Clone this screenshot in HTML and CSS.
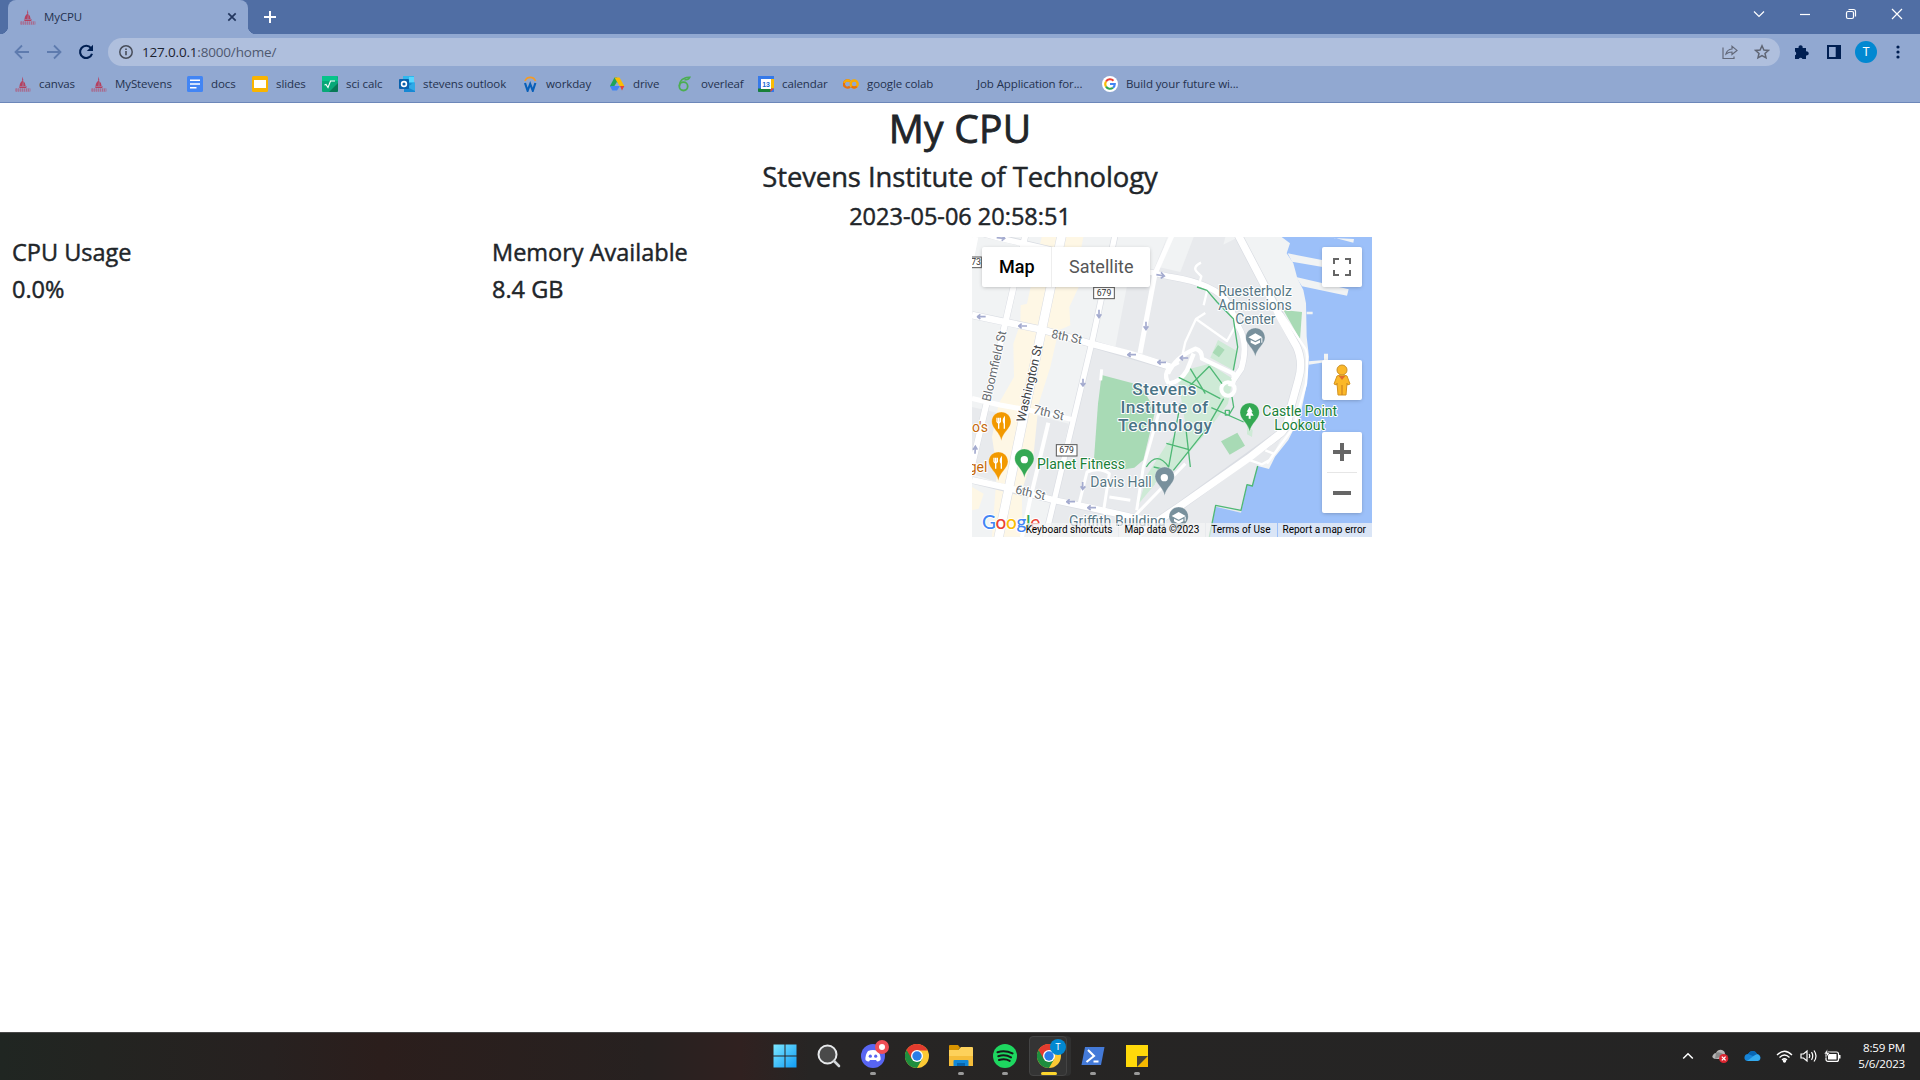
FILE: index.html
```html
<!DOCTYPE html>
<html lang="en">
<head>
<meta charset="utf-8">
<title>MyCPU</title>
<link rel="stylesheet" href="styles.css">
</head>
<body>
<svg class="defs" width="0" height="0">
  <defs>
    <symbol id="stevens" viewBox="0 0 16 16">
      <path d="M7.6 0.5 L8.3 4 L8 5 L7 4.5Z M4.5 10 Q5 6 8 4.6 L7.6 10Z M8.3 5 Q10.8 7 10.6 10 L8.3 10Z M3.8 10.6 H12 L11 12 H4.6Z" fill="#b5405f"/>
      <path d="M.5 13h15M.5 15h15" stroke="#b25272" stroke-width="1" stroke-dasharray="1.5 .6"/>
      <path d="M.5 14h15" stroke="#b25272" stroke-width="1" stroke-dasharray=".8 1.3"/>
    </symbol>
    <symbol id="chrome" viewBox="0 0 24 24">
      <circle cx="12" cy="12" r="12" fill="#fcc934"/>
      <path d="M12 12 L1.6 6 A12 12 0 0 0 12 24 L17.2 15Z" fill="#1e8e3e"/>
      <path d="M12 6.5 H22.6 A12 12 0 0 0 1.6 6 L6.8 15 L12 12Z" fill="#e33b2e"/>
      <circle cx="12" cy="12" r="6" fill="#fff"/><circle cx="12" cy="12" r="4.7" fill="#2a7de9"/>
    </symbol>
    <symbol id="pin" viewBox="0 0 60 88"><path d="M30 1C13 1 1 14 1 30C1 50 25 60 30 87C35 60 59 50 59 30C59 14 47 1 30 1Z" fill="currentColor" stroke="#fff" stroke-opacity=".6" stroke-width="1.5"/></symbol>
    <symbol id="arrow" viewBox="-14 -9 28 18"><path d="M13 0H-8M-3 -7L-12 0L-3 7" fill="none" stroke="#a4abcf" stroke-width="5"/></symbol>
  </defs>
</svg>
<header class="browser">
  <div class="tabstrip">
    <div class="tab"><svg width="16" height="16"><use href="#stevens"/></svg><span>MyCPU</span>
      <svg class="tab-close" width="10" height="10" viewBox="0 0 10 10"><path d="M1.3 1.3l7.4 7.4M8.7 1.3L1.3 8.7" stroke="#22365e" stroke-width="1.7"/></svg></div>
    <svg class="newtab" width="12" height="12" viewBox="0 0 12 12"><path d="M6 0v12M0 6h12" stroke="#fff" stroke-width="2"/></svg>
    <div class="window-buttons">
      <svg width="12" height="12" viewBox="0 0 12 12"><path d="M1 3.5l5 5 5-5"/></svg>
      <svg width="12" height="12" viewBox="0 0 12 12"><path d="M1 6.5h10"/></svg>
      <svg width="12" height="12" viewBox="0 0 12 12"><rect x="1.5" y="3.5" width="7" height="7" rx="1.5"/><path d="M3.5 1.5H8.5Q10.5 1.5 10.5 3.5V8.5"/></svg>
      <svg width="12" height="12" viewBox="0 0 12 12"><path d="M1 1l10 10M11 1L1 11"/></svg>
    </div>
  </div>
  <div class="toolbar">
    <svg class="nav" width="16" height="16" viewBox="0 0 16 16"><path d="M15 8H2M8 1.5L1.5 8L8 14.5" fill="none" stroke="#5e7bae" stroke-width="1.8"/></svg>
    <svg class="nav" width="16" height="16" viewBox="0 0 16 16"><path d="M1 8h13M8 1.5L14.5 8L8 14.5" fill="none" stroke="#5e7bae" stroke-width="1.8"/></svg>
    <svg class="nav" width="16" height="16" viewBox="0 0 16 16"><path d="M13 4.2A6.1 6.1 0 1 0 14 9.7" fill="none" stroke="#001f52" stroke-width="2.1"/><path d="M15 .8V7H8.8Z" fill="#001f52"/></svg>
    <div class="address">
      <svg width="14" height="14" viewBox="0 0 14 14"><circle cx="7" cy="7" r="6.2" fill="none" stroke="#474d5a" stroke-width="1.5"/><path d="M7 6v4.3M7 3.4v1.6" stroke="#474d5a" stroke-width="1.6"/></svg>
      <span class="url"><b>127.0.0.1</b>:8000/home/</span>
      <svg class="share" width="16" height="16" viewBox="0 0 16 16" fill="none" stroke="#63697a" stroke-width="1.2"><path d="M1 3.5V14.5H12V12.5M4 10Q5 5.5 10 5V2.2L15 6.4L10 10.5V8Q6.5 8 4 10Z"/></svg>
      <svg width="16" height="16" viewBox="0 0 16 16"><path d="M8 1.8L9.9 6L14.4 6.4L11 9.4L12 13.8L8 11.5L4 13.8L5 9.4L1.6 6.4L6.1 6Z" fill="none" stroke="#5f6574" stroke-width="1.5"/></svg>
    </div>
    <div class="actions">
      <svg width="16" height="16" viewBox="0 0 16 16"><path d="M1 4H4.6A2.1 2.1 0 1 1 8.6 4H12V7.4A2.1 2.1 0 1 1 12 11.4V15H8.5A2.1 2.1 0 0 0 4.7 15H1V11.3A2.1 2.1 0 0 0 1 7.5Z" fill="#001f52"/></svg>
      <svg width="14" height="14" viewBox="0 0 14 14"><path d="M0 0H14V14H0ZM2 2V12H8.7V2Z" fill="#001f52" fill-rule="evenodd"/></svg>
      <span class="avatar">T</span>
      <svg width="4" height="14" viewBox="0 0 4 14" fill="#001f52"><circle cx="2" cy="2" r="1.6"/><circle cx="2" cy="7" r="1.6"/><circle cx="2" cy="12" r="1.6"/></svg>
    </div>
  </div>
  <nav class="bookmarks">
    <a><svg viewBox="0 0 16 16"><use href="#stevens"/></svg>canvas</a>
    <a><svg viewBox="0 0 16 16"><use href="#stevens"/></svg>MyStevens</a>
    <a><svg viewBox="0 0 16 16"><rect width="16" height="16" rx="1.5" fill="#4285f4"/><path d="M3 4.2h10M3 8h10M3 11.8h6.5" stroke="#fff" stroke-width="1.6"/></svg>docs</a>
    <a><svg viewBox="0 0 16 16"><rect width="16" height="16" rx="1.5" fill="#f9b401"/><rect x="2" y="4" width="12" height="8" fill="#fff"/></svg>slides</a>
    <a><svg viewBox="0 0 16 16"><rect width="16" height="16" rx="1" fill="#08a878"/><path d="M1 0H15L16 5H0V1Z" fill="#06c48a"/><path d="M7 16L16 7V15L15 16Z" fill="#087856"/><path d="M2.5 9L4 8.5L6 11.5L8.5 5H13" fill="none" stroke="#fff" stroke-width="1.1"/></svg>sci calc</a>
    <a><svg viewBox="0 0 16 16"><rect x="4" width="11" height="9" fill="#31b7ed"/><path d="M10 1H15V6H10Z" fill="#57d6ff"/><path d="M5 6L16 8V16H5Z" fill="#1688d4"/><path d="M8 11L16 6V15Z" fill="#30a9e7"/><rect y="3" width="10" height="10" rx="1" fill="#0861ad"/><circle cx="5" cy="8" r="2.4" fill="none" stroke="#fff" stroke-width="1.6"/></svg>stevens outlook</a>
    <a><svg viewBox="0 0 16 16"><path d="M3 5A5.6 5.6 0 0 1 13.5 5" fill="none" stroke="#f39b28" stroke-width="1.8"/><path d="M3 7L5.6 14.8L8.2 8L10.8 14.8L13.4 7" fill="none" stroke="#075fb9" stroke-width="2.1"/></svg>workday</a>
    <a><svg viewBox="0 0 16 16"><path d="M5.5 1.5H8L10 5L4 14L1 10Z" fill="#1da45a"/><path d="M5.5 1.5H10.5L15.3 10H10.3Z" fill="#fbbc04"/><path d="M1 10H11L8 14.5H3.3Z" fill="#4285f4"/><path d="M11 10H15.3L13 14.5Z" fill="#e94235"/><path d="M8 5.8L5.4 10H10.4Z" fill="#91a8d1"/></svg>drive</a>
    <a><svg viewBox="0 0 16 16"><circle cx="6.5" cy="10.3" r="4.2" fill="none" stroke="#4bae51" stroke-width="1.8"/><path d="M2.4 10Q2.5 4.5 7 2.5Q9.5 1.2 12.8 1.3Q11.5 4.3 7.5 3.6" fill="none" stroke="#4bae51" stroke-width="1.6"/></svg>overleaf</a>
    <a><svg viewBox="0 0 16 16"><path d="M0 0H16V16H0Z" fill="#3579e9"/><path d="M12.5 3H16V12.5H12.5Z" fill="#fbbc04"/><path d="M0 12.5H12.5V16H1Q0 16 0 15Z" fill="#188038"/><path d="M12.5 12.5H16L12.5 16Z" fill="#ea4335"/><path d="M3 3H13V13H3Z" fill="#fff"/><text x="8" y="10.9" class="cal">13</text></svg>calendar</a>
    <a><svg viewBox="0 0 16 16" fill="none" stroke-width="2.4"><path d="M7 5.4A3.6 3.6 0 1 0 7 10.6" stroke="#e8710a"/><path d="M1.2 7A3.6 3.6 0 0 1 7 5.4" stroke="#f9ab00"/><circle cx="11.2" cy="8" r="3.5" stroke="#f9ab00"/><path d="M13.7 10.5A3.5 3.5 0 0 1 8.7 10.5" stroke="#e8710a"/></svg>google colab</a>
    <a><svg viewBox="0 0 16 16"></svg>Job Application for...</a>
    <a><svg viewBox="0 0 16 16" fill="none" stroke-width="2.1"><circle cx="8" cy="8" r="8" fill="#fff"/><path d="M4 5.5A4.8 4.8 0 0 1 11.5 4.7" stroke="#ea4335"/><path d="M4 5.5A4.8 4.8 0 0 0 4 10.6" stroke="#fbbc04"/><path d="M4 10.6A4.8 4.8 0 0 0 11 11.7" stroke="#34a853"/><path d="M11 11.7A4.8 4.8 0 0 0 12.8 8H8" stroke="#4285f4"/></svg>Build your future wi...</a>
  </nav>
</header>

<main class="page">
  <h1>My CPU</h1>
  <h3>Stevens Institute of Technology</h3>
  <h4 class="date">2023-05-06 20:58:51</h4>
  <div class="row">
    <section><h4>CPU Usage</h4><h4>0.0%</h4></section>
    <section><h4>Memory Available</h4><h4>8.4 GB</h4></section>
    <section>
      <div class="map">
        <svg class="map-canvas" width="400" height="300" viewBox="0 0 1200 900">
          <rect width="1200" height="900" fill="#f1f3f4"/>
          <path d="M470 120L600 100L800 0L870 129L990 370L960 540L900 660L857 687L841 747L807 827L731 809L712 900H219L300 545L359 319L430 330Z" fill="#e8eaed"/>
          <path d="M585 0H760L720 160L540 110ZM0 510L130 540L90 740L0 710ZM170 530L290 560L240 780L130 750Z" fill="#e8eaed"/>
          <path d="M585 0H665L625 105L560 90Z" fill="#f1f3f4"/>
          <path d="M209 0H334L315 100L320 150L292 210L295 265L260 280L235 390L200 500L185 650L150 760L150 899H60L75 700L60 600L80 500L126 420L124 320L145 260L146 205L165 200Z" fill="#fef7e5"/>
          <path d="M0 750L35 770L20 815L0 820Z" fill="#fef7e5"/>
          <path d="M929 0L954 19L944 49L964 79L976 124L994 159L1002 199L1004 299L1011 359L1004 444L984 539L949 609L909 659L891 696L857 687L841 747L825 743L807 827L731 809L712 900H1200V0Z" fill="#9cc0f9"/>
          <path d="M947 49L1065 72V92L960 74ZM972 120L1130 157L1125 176L990 148ZM1020 0L1146 6L1144 17L1090 3ZM1004 224H1022V232H1004ZM1010 373L1056 369V350H1068V374L1010 383Z" fill="#f1f3f4"/>
          <path d="M934 219L990 225L984 307Z" fill="#a8dab5"/>
          <path d="M389 414L505 445L550 520L514 669L487 692L444 699L385 688L366 665L378 500Z" fill="#a8dab5"/>
          <path d="M738 309L796 343L784 400L715 362ZM655 395L712 380L782 425L768 500L700 590L604 700L540 745L515 730L585 620L640 560L618 430ZM525 720L550 740L500 800ZM826 565L842 580L840 600L825 592Z" fill="#ceead6"/>
          <path d="M738 324L758 338L741 361L722 347ZM796 587L819 626L773 653L747 613Z" fill="#a8dab5"/>
          <g class="roads edge">
            <path d="M269 -5L207 289L79 905" stroke-width="29"/><path d="M160 -5L104 240L-10 729" stroke-width="21"/>
            <path d="M429 -5L359 319L219 905" stroke-width="20"/><path d="M0 234L214 279L354 319L594 389" stroke-width="23"/>
            <path d="M34 -10L264 45L594 119Q730 140 769 199L807 285Q830 320 808 395L784 430" stroke-width="20"/><path d="M0 729L244 789L474 839L560 855" stroke-width="22"/>
            <path d="M799 -5L869 129L974 329Q995 375 979 429L954 519Q948 575 919 594L629 804L480 905" stroke-width="26"/>
          </g>
          <g class="roads">
            <path d="M269 -5L207 289L79 905" stroke-width="26"/><path d="M160 -5L104 240L-10 729M10 0L-6 80" stroke-width="18"/>
            <path d="M429 -5L359 319L219 905" stroke-width="16"/><path d="M229 557L174 789L149 905" stroke-width="12"/>
            <path d="M600 -5L549 110L504 349" stroke-width="15"/>
            <path d="M0 234L94 254L214 279L354 319L474 351L594 389" stroke-width="20"/>
            <path d="M0 484L84 504L174 520L299 547" stroke-width="15"/>
            <path d="M34 -10L84 4L264 45L594 119Q730 140 769 199L800 270Q830 320 808 395L784 430" stroke-width="17"/>
            <path d="M0 729L114 754L244 789L364 814L474 839L560 855" stroke-width="19"/>
            <path d="M799 -5L869 129L929 249L974 329Q995 375 979 429L954 519Q948 575 919 594L829 664L629 804L480 905" stroke-width="22"/>
            <path d="M588 410Q610 360 670 335Q690 340 690 365L784 410Q790 450 770 440M590 440Q625 435 645 400L665 350M590 440Q565 400 620 375" stroke-width="13"/>
            <path d="M632 350L640 315L672 246L765 312L800 250M672 246L700 228" stroke-width="7"/>
            <path d="M687 77Q660 90 675 105L688 118L684 132M695 205L708 150" stroke-width="7"/>
            <circle cx="768" cy="456" r="20" stroke-width="12"/>
            <path d="M389 397L386 430M494 820L514 690L560 530M320 805L345 705Q385 690 412 710L395 820M412 780L475 790M475 850L640 680" stroke-width="9"/>
            <path d="M929 229L1000 335Q1010 350 1002 440L965 570L885 680M835 670L870 682L892 670L905 650L880 640" stroke-width="7"/>
          </g>
          <g fill="none" stroke="#4fb875" stroke-width="4" stroke-linejoin="round">
            <path d="M675 150L705 160L735 195L784 245L797 330L784 400"/>
            <path d="M620 421L675 448L745 485M712 388L650 450M712 388L750 440M655 395L700 470M718 512L815 555M780 480L785 510L770 535M755 485L700 580L604 700M583 619L651 638M545 690L590 700M523 690Q555 640 590 690L625 500M655 690L640 560M760 520h12v14h-12z"/>
            <path d="M857 687L841 747L825 743L807 820L731 805L712 900"/>
          </g>
          <g><use href="#arrow" x="14" y="230" width="28" height="18"/><use href="#arrow" x="138" y="258" width="28" height="18"/><use href="#arrow" x="465" y="344" width="28" height="18"/><use href="#arrow" x="555" y="367" width="28" height="18"/><use href="#arrow" x="622" y="354" width="28" height="18"/><use href="#arrow" x="282" y="785" width="28" height="18"/><use href="#arrow" x="345" y="803" width="28" height="18"/>
            <path d="M74 2L98 4M91 -4L98 4L89 11M553 113L577 117M567 106L577 117L566 124M381 218V242M374 232L381 242L388 232M522 254V278M515 268L522 278L529 268M333 425V447M326 438L333 447L340 438M332 735V757M326 748L332 757L340 748M9 650L10 628M3 638L10 628L16 638" fill="none" stroke="#a4abcf" stroke-width="5"/></g>
          <g fill="#fff" stroke="#555" stroke-width="3"><rect x="365" y="151" width="62" height="34"/><rect x="253" y="623" width="62" height="34"/><rect x="-40" y="60" width="68" height="32"/></g>
          <g class="shield"><text x="396" y="177">679</text><text x="284" y="649">679</text><text x="12" y="85">73</text></g>
          <g class="street">
            <text transform="translate(236 302) rotate(12)" textLength="94">8th St</text><text transform="translate(182 529) rotate(13)" textLength="93">7th St</text><text transform="translate(128 769) rotate(13)" textLength="92">6th St</text>
            <text transform="translate(55 495) rotate(-77)" textLength="216">Bloomfield St</text><text class="strong" transform="translate(158 557) rotate(-77)" textLength="236">Washington St</text>
          </g>
          <svg x="58" y="524" width="60" height="88" class="food"><use href="#pin"/></svg><svg x="49" y="644" width="60" height="88" class="food"><use href="#pin"/></svg>
          <g fill="none" stroke="#fff"><path d="M75 542V554Q80 562 85 554V542M80 542V575M97 575V542Q91 550 97 560M66 662V674Q71 682 76 674V662M71 662V695M88 695V662Q82 670 88 680" stroke-width="4"/></g>
          <svg x="127" y="635" width="60" height="88" class="green"><use href="#pin"/></svg><circle cx="157" cy="668" r="11" fill="#fff"/>
          <svg x="803" y="497" width="60" height="88" class="green"><use href="#pin"/></svg><path d="M833 509L842 524H838L845 536H836V545H830V536H821L828 524H824Z" fill="#fff"/>
          <svg x="820" y="272" width="60" height="88" class="gray"><use href="#pin"/></svg><svg x="548" y="689" width="60" height="88" class="gray"><use href="#pin"/></svg><svg x="590" y="809" width="60" height="88" class="gray"><use href="#pin"/></svg>
          <circle cx="577" cy="722" r="11" fill="#fff"/>
          <g fill="#fff"><path d="M829 301L850 289L871 301L850 312ZM836 309V317L850 324L864 317V309L850 316ZM868 303h3v14h-3z"/><path d="M599 837L620 825L641 837L620 848ZM606 845V853L620 860L634 853V845L620 852ZM638 839h3v14h-3z"/></g>
          <g class="place gray-text">
            <text x="849" y="177" textLength="221">Ruesterholz</text><text x="849" y="219" textLength="221">Admissions</text><text x="850" y="261" textLength="121">Center</text>
            <text x="447" y="749" textLength="184">Davis Hall</text><text x="436" y="867" textLength="290">Griffith Building</text></g>
          <g class="place green-text"><text x="327" y="696" textLength="264">Planet Fitness</text><text x="983" y="537" textLength="224">Castle Point</text><text x="983" y="579" textLength="152">Lookout</text></g>
          <g class="place orange-text"><text x="24" y="585">o's</text><text x="18" y="705">gel</text></g>
          <g class="campus"><text x="577" y="474" textLength="192">Stevens</text><text x="577" y="528" textLength="263">Institute of</text><text x="579" y="582" textLength="282">Technology</text></g>
          <g class="logo"><text x="30" y="877"><tspan fill="#4285f4">G</tspan><tspan fill="#ea4335">o</tspan><tspan fill="#fbbc04">o</tspan><tspan fill="#4285f4">g</tspan><tspan fill="#34a853">l</tspan><tspan fill="#ea4335">e</tspan></text></g>
        </svg>
        <div class="map-type"><span class="selected">Map</span><span>Satellite</span></div>
        <div class="control full"><svg width="18" height="18" viewBox="0 0 18 18"><path d="M1 6V1H6M12 1H17V6M17 12V17H12M6 17H1V12" fill="none" stroke="#666" stroke-width="2"/></svg></div>
        <div class="control person"><svg width="20" height="32" viewBox="0 0 20 32"><path d="M5 12Q10 9 15 12L18 20L15.5 21L15 19L14 31H6L5 19L4.5 21L2 20Z" fill="#fbb829" stroke="#d49320"/><circle cx="10" cy="6" r="5" fill="#fbb829" stroke="#c8902a"/><path d="M6.7 12L10 16L13.3 12Z" fill="#e06b2d"/><path d="M10 21V31" stroke="#c57a21"/></svg></div>
        <div class="zoom"><svg width="18" height="18" viewBox="0 0 18 18"><path d="M9 0V18M0 9H18" stroke="#666" stroke-width="4"/></svg><i></i><svg width="18" height="18" viewBox="0 0 18 18"><path d="M0 9H18" stroke="#666" stroke-width="4"/></svg></div>
        <div class="legal"><span>Keyboard shortcuts</span><span>Map data ©2023</span><span>Terms of Use</span><span>Report a map error</span></div>
      </div>
    </section>
  </div>
</main>

<footer class="taskbar">
  <div class="apps">
    <div class="app"><svg width="24" height="24" viewBox="0 0 24 24"><defs><linearGradient id="win" x2="1" y2="1"><stop stop-color="#7ce7ff"/><stop offset="1" stop-color="#109cf5"/></linearGradient></defs><path d="M.5 .5H11.5V11.5H.5ZM12.5 .5H23.5V11.5H12.5ZM.5 12.5H11.5V23.5H.5ZM12.5 12.5H23.5V23.5H12.5Z" fill="url(#win)"/></svg></div>
    <div class="app"><svg width="24" height="24" viewBox="0 0 24 24"><circle cx="10.5" cy="10.5" r="9" fill="#4a4a4a" stroke="#e7e9eb" stroke-width="2"/><path d="M17 17l5 5" stroke="#d3d7da" stroke-width="2.6" stroke-linecap="round"/></svg></div>
    <div class="app open"><svg width="24" height="24" viewBox="0 0 24 24"><circle cx="12" cy="12" r="12" fill="#5865f2"/><path d="M7 7Q12 5 17 7Q20 11 19.5 16Q17.5 17.5 16 17.5L15 16H9L8 17.5Q6 17.5 4.5 16Q4 11 7 7Z" fill="#fff"/><circle cx="9.3" cy="12.2" r="1.6" fill="#5865f2"/><circle cx="14.7" cy="12.2" r="1.6" fill="#5865f2"/></svg><b class="alert"></b></div>
    <div class="app"><svg width="24" height="24"><use href="#chrome"/></svg></div>
    <div class="app open"><svg width="24" height="24" viewBox="0 0 24 24"><path d="M0 2Q0 1 1 1H9L11 3.5L9 6H0Z" fill="#d99400"/><path d="M0 6H9L12 3H23Q24 3 24 4V22H0Z" fill="#fdd15b"/><path d="M0 12H24V22H0Z" fill="#f5bd3a"/><path d="M4.5 22V17Q4.5 16 5.5 16H18.5Q19.5 16 19.5 17V22Z" fill="#1288d8"/><path d="M8 22V19H16V22Z" fill="#0865ac"/></svg></div>
    <div class="app open"><svg width="24" height="24" viewBox="0 0 24 24"><circle cx="12" cy="12" r="12" fill="#1ed760"/><path d="M4.5 8.2Q12 5.8 19.5 9.4M5.3 12.2Q12 10 18 13.3M6 16Q12 14.2 16.7 16.8" fill="none" stroke="#171a18" stroke-width="2.1" stroke-linecap="round"/></svg></div>
    <div class="app open active"><svg width="24" height="24"><use href="#chrome"/></svg><b class="profile">T</b></div>
    <div class="app open"><svg width="24" height="24" viewBox="0 0 24 24"><path d="M4 3H23.5L20 21H.5Z" fill="#447ad8"/><path d="M7 6L13 12L5.5 18M12.5 17.5H17.5" fill="none" stroke="#fff" stroke-width="2.1"/></svg></div>
    <div class="app open"><svg width="24" height="24" viewBox="0 0 24 24"><path d="M1 1H23V23H1Z" fill="#ffd90a"/><path d="M12 23L23 12V23Z" fill="#f5b800"/><path d="M12 12H23L12 23Z" fill="#454137"/></svg></div>
  </div>
  <div class="tray">
    <svg width="12" height="8" viewBox="0 0 12 8"><path d="M1.2 6.5L6 1.7L10.8 6.5" fill="none" stroke="#fff" stroke-width="1.5"/></svg>
    <svg class="cloud" width="17" height="16" viewBox="0 0 17 16"><path d="M3 11Q-1 10 1 7Q2 5 4 5Q6 1 10 2Q13 3 13 6L14 11Z" fill="#b6b6b6"/><path d="M4 5Q7 3 13 7L3 11Z" fill="#8a8a8a"/><circle cx="11.7" cy="10.5" r="4.6" fill="#dc2631"/><path d="M9.8 8.6l3.8 3.8M13.6 8.6l-3.8 3.8" stroke="#fff" stroke-width="1.3"/></svg>
    <svg class="onedrive" width="17" height="12" viewBox="0 0 17 12"><path d="M3 11Q0 10 .5 7Q1 4 4 4Q6 .5 9.5 1Q12 1.5 13 4Q16 4.5 16.5 7.5Q16.5 11 13.5 11Z" fill="#1684d8"/><path d="M3 11L11 5Q13 3.5 15 5Q18 9 13.5 11Z" fill="#35abee"/><path d="M4 4Q6 .5 9.5 1Q12 1.5 13 4L9 6Z" fill="#0866b3"/></svg>
    <svg width="17" height="13" viewBox="0 0 17 13" fill="none" stroke="#fff" stroke-width="1.3"><path d="M1 5Q8.5-2.5 16 5M3.5 7.5Q8.5 2.5 13.5 7.5M6 10Q8.5 7.5 11 10"/><circle cx="8.5" cy="11" r="1" fill="#fff"/></svg>
    <svg class="speaker" width="17" height="14" viewBox="0 0 17 14" fill="none" stroke="#fff" stroke-width="1.2"><path d="M1 5H3.5L7 2V12L3.5 9H1ZM9 5Q10.5 7 9 9M11.5 3.2Q14 7 11.5 10.8M14 1.5Q18 7 14 12.5"/></svg>
    <svg class="battery" width="17" height="14" viewBox="0 0 17 14"><rect x="2" y="3" width="12.5" height="9.4" rx="2" fill="none" stroke="#fff" stroke-width="1.2"/><path d="M4 5H12.5V10.5H4ZM15 6H16.5V9.5H15Z" fill="#fff"/><path d="M3.5 0L0 5H2.5L1.7 9L6 3.6H3.4Z" fill="#fff" stroke="#222" stroke-width=".5"/></svg>
    <div class="clock"><span>8:59 PM</span><span>5/6/2023</span></div>
  </div>
</footer>
</body>
</html>
```

FILE: styles.css
```css
* { box-sizing: border-box; }
body { margin: 0; height: 1080px; display: flex; flex-direction: column; overflow: hidden; background: #fff; color: #212529; font-family: "Open Sans", "Noto Sans", sans-serif; }
svg { display: block; flex: none; }
.defs { position: absolute; }

.browser { height: 103px; background: #91a8d1; border-bottom: 1px solid #6c87b9; color: #24324f; font-size: 11.5px; }
.tabstrip { height: 34px; background: #506ea4; display: flex; padding-left: 8px; }
.tab { width: 240px; height: 34px; padding: 0 11px 6px 12px; background: #91a8d1; border-radius: 8px 8px 0 0; display: flex; align-items: center; gap: 8px; position: relative; }
.tab::before, .tab::after { content: ""; position: absolute; bottom: 0; width: 8px; height: 8px; }
.tab::before { left: -8px; background: radial-gradient(circle at 0 0, transparent 8px, #91a8d1 8.5px); }
.tab::after { right: -8px; background: radial-gradient(circle at 100% 0, transparent 8px, #91a8d1 8.5px); }
.tab span { letter-spacing: -.1px; padding-top: 5px; }
.tab svg { margin-top: 5px; }
.tab .tab-close { margin-left: auto; }
.newtab { margin: 11px 0 0 16px; }
.window-buttons { margin: 8px 17px 0 auto; display: flex; gap: 34px; }
.window-buttons path, .window-buttons rect { fill: none; stroke: #fff; stroke-width: 1.2; }
.toolbar { height: 36px; padding: 4px 20px 4px 14px; display: flex; align-items: center; }
.nav { margin-right: 16px; }
.nav + .nav + .nav { margin-right: 14px; }
.address { flex: 1; height: 28px; border-radius: 14px; background: #afbfdd; display: flex; align-items: center; padding: 0 10px 0 11px; }
.url { margin-left: 9px; flex: 1; font-size: 13.5px; color: #4e586f; letter-spacing: -.18px; }
.url b { font-weight: 400; color: #1b2230; }
.share { margin-right: 16px; }
.actions { display: flex; align-items: center; margin-left: 14px; gap: 17px; }
.avatar { width: 22px; height: 22px; border-radius: 50%; background: #0288d1; color: #fff; text-align: center; font: 12px/22px Roboto, sans-serif; margin: 0 2px 0 -3px; }
.bookmarks { display: grid; grid-template-columns: 76px 96px 65px 70px 77px 123px 87px 68px 81px 85px 110px 149px 150px; padding-left: 15px; height: 27px; align-items: center; }
.bookmarks a { display: flex; align-items: center; gap: 8px; white-space: nowrap; letter-spacing: -.1px; }
.bookmarks svg { width: 16px; height: 16px; }
.cal { font: bold 7px "Liberation Sans", sans-serif; fill: #1967d2; text-anchor: middle; }

.page { flex: 1; padding-top: 1px; }
h1, h3, h4 { margin: 0 0 8px; font-weight: 500; line-height: 1.2; -webkit-text-stroke: .45px #212529; }
h1, h3, .date { text-align: center; }
h1 { font-size: 39px; line-height: 48px; letter-spacing: .25px; -webkit-text-stroke-width: .8px; }
h3 { font-size: 27.4px; line-height: 33.6px; letter-spacing: -.07px; }
h4 { font-size: 23.5px; line-height: 28.8px; letter-spacing: 0; }
.row { display: grid; grid-template-columns: repeat(4, 480px); }
.row section { padding: 0 12px; }

.map { position: relative; top: -1px; width: 400px; height: 300px; overflow: hidden; font-family: Roboto, sans-serif; }
.roads { fill: none; stroke: #fff; stroke-linejoin: round; }
.edge { stroke: #dadde3; }
.food { color: #f29900; }
.green { color: #34a853; }
.gray { color: #78909c; }
.map-canvas text { font-family: Roboto, sans-serif; paint-order: stroke; stroke: #fff; stroke-width: 6px; stroke-linejoin: round; }
.map-canvas .shield text { font-size: 26px; fill: #333; text-anchor: middle; stroke: none; }
.street text { font-size: 37px; fill: #666b70; }
.street .strong { fill: #3c4043; }
.place text { font-size: 42px; text-anchor: middle; }
.gray-text { fill: #577785; }
.green-text { fill: #188038; }
.orange-text { fill: #c5690c; }
.campus text { font-size: 52px; font-weight: 500; text-anchor: middle; fill: #4a7487; }
.map-canvas .logo text { font-size: 57px; letter-spacing: -1px; font-family: Lato, sans-serif; font-weight: 500; }
.map-type { position: absolute; left: 10px; top: 10px; height: 40px; display: flex; background: #fff; border-radius: 2px; box-shadow: 0 1px 4px -1px rgba(0,0,0,.3); font-size: 18px; line-height: 40px; color: #565656; }
.map-type span { padding: 0 17px; }
.map-type .selected { font-weight: 500; color: #000; width: 70px; border-right: 1px solid #eee; }
.control, .zoom { position: absolute; right: 10px; width: 40px; background: #fff; border-radius: 2px; box-shadow: 0 1px 4px -1px rgba(0,0,0,.3); display: flex; align-items: center; }
.control { height: 40px; justify-content: center; }
.full { top: 10px; }
.person { top: 123px; }
.zoom { top: 195px; height: 81px; flex-direction: column; justify-content: space-between; padding: 11px 0; }
.zoom i { width: 30px; height: 1px; background: #e6e6e6; }
.legal { position: absolute; right: 0; bottom: 0; height: 14px; display: flex; font-size: 10px; line-height: 14px; color: #000; white-space: nowrap; }
.legal span { background: rgba(245,245,245,.7); padding: 0 6px 0 5px; margin-left: 1px; }
.legal span:first-child { padding-left: 0; }

.taskbar { height: 48px; background: linear-gradient(90deg, #202622 0, #232421 100px, #272120 270px, #2b1e1c 380px, #272120 650px, #302120 740px, #272524 810px, #242424); border-top: 1px solid #484848; color: #fff; display: grid; grid-template-columns: 763px 1fr auto; }
.apps { grid-column: 2; display: flex; }
.app { width: 44px; height: 46px; display: flex; justify-content: center; align-items: center; position: relative; }
.open::after { content: ""; position: absolute; width: 6px; height: 3px; bottom: 4px; border-radius: 2px; background: #9a9a9a; }
.active::before { content: ""; position: absolute; inset: 3px 4px 3px 2px; background: #343434; border: 1px solid #444; border-radius: 4px; box-shadow: 4px 0 0 #303030; }
.active svg { position: relative; }
.active::after { width: 16px; background: #fcd52d; }
.alert, .profile { position: absolute; border-radius: 50%; }
.alert { width: 14px; height: 14px; background: #fff; border: 4px solid #f04f56; left: 24px; top: 7px; }
.profile { width: 16px; height: 16px; background: #0288d1; left: 23px; top: 6px; color: #fff; text-align: center; font: 9px/16px Roboto, sans-serif; }
.tray { display: flex; align-items: center; padding-right: 15px; height: 46px; }
.cloud { margin-left: 18px; }
.onedrive { margin: 0 15px; }
.speaker { margin: 0 7px; }
.clock { width: 57px; margin-left: 7px; display: flex; flex-direction: column; text-align: right; font-size: 11.6px; line-height: 16px; letter-spacing: -.2px; }
```
